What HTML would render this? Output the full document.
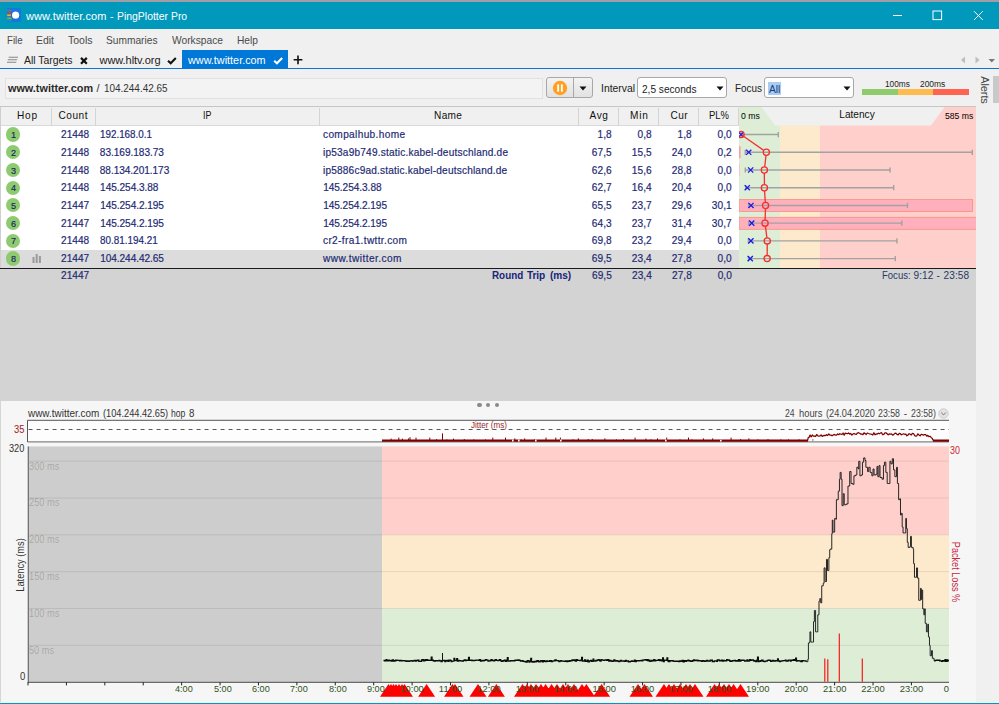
<!DOCTYPE html>
<html><head><meta charset="utf-8"><title>www.twitter.com - PingPlotter Pro</title>
<style>
html,body{margin:0;padding:0}
body{width:999px;height:704px;overflow:hidden;background:#f0f0f0;position:relative;font-family:"Liberation Sans",sans-serif}
.r{position:absolute;display:block}
.t{position:absolute;white-space:nowrap;line-height:14px;height:14px}
</style></head><body>
<div class="r" style="left:0px;top:0px;width:999px;height:2px;background:#a29ea6;"></div>
<div class="r" style="left:0px;top:2px;width:999px;height:27.3px;background:#0099bc;"></div>
<svg class="r" style="left:7px;top:8px" width="14" height="14" viewBox="0 0 14 14"><rect width="14" height="14" fill="#1677dc"/><rect x="0" y="2" width="4.6" height="0.9" fill="#2b8df0"/><rect x="0" y="11.9" width="4.6" height="0.9" fill="#2b8df0"/><path d="M0.2 3.3H4.8L4.3 5H0.2Z" fill="#f0381f"/><rect x="0.2" y="6.4" width="3.6" height="1.7" fill="#f5b800"/><path d="M0.2 9.4H4.3L4.8 11.2H0.2Z" fill="#7cc00a"/><circle cx="8.6" cy="7.2" r="4.3" fill="#0e62cf"/><circle cx="8.6" cy="7.2" r="3.6" fill="#fff"/></svg>
<span class="t" style="left:26.00px;top:9px;font-size:11px;letter-spacing:0.118px;color:#fff;">www.twitter.com </span>
<span class="t" style="left:110.30px;top:9px;font-size:11px;transform:scaleX(0.9554);transform-origin:0 50%;color:#fff;">- </span>
<span class="t" style="left:117.00px;top:9px;font-size:11px;transform:scaleX(0.9478);transform-origin:0 50%;color:#fff;">PingPlotter </span>
<span class="t" style="left:171.40px;top:9px;font-size:11px;transform:scaleX(0.9405);transform-origin:0 50%;color:#fff;">Pro</span>
<svg class="r" style="left:880px;top:2px" width="119" height="28" viewBox="0 0 119 28"><g stroke="#fff" stroke-width="1" fill="none"><path d="M13 13.5H22"/><rect x="53" y="9" width="8.6" height="8.6"/><path d="M94 9.2L102.8 18M102.8 9.2L94 18"/></g></svg>
<span class="t" style="left:6.50px;top:33px;font-size:11px;transform:scaleX(0.8744);transform-origin:0 50%;color:#4a4a4a;">File</span>
<span class="t" style="left:35.50px;top:33px;font-size:11px;transform:scaleX(0.9496);transform-origin:0 50%;color:#4a4a4a;">Edit</span>
<span class="t" style="left:67.50px;top:33px;font-size:11px;transform:scaleX(0.9541);transform-origin:0 50%;color:#4a4a4a;">Tools</span>
<span class="t" style="left:106.00px;top:33px;font-size:11px;transform:scaleX(0.9258);transform-origin:0 50%;color:#4a4a4a;">Summaries</span>
<span class="t" style="left:172.00px;top:33px;font-size:11px;transform:scaleX(0.9303);transform-origin:0 50%;color:#4a4a4a;">Workspace</span>
<span class="t" style="left:237.00px;top:33px;font-size:11px;transform:scaleX(0.9282);transform-origin:0 50%;color:#4a4a4a;">Help</span>
<div class="r" style="left:182.2px;top:50px;width:105.4px;height:18.3px;background:#0078d7;"></div>
<div class="r" style="left:0px;top:67.6px;width:999px;height:1.8px;background:#0a74d4;"></div>
<svg class="r" style="left:6px;top:55px" width="14" height="10" viewBox="0 0 14 10"><g stroke="#858585" stroke-width="1.1"><path d="M2.7 2.3H12M1.8 4.8H11.1M1 7.3H10.3"/></g></svg>
<span class="t" style="left:24.00px;top:53px;font-size:11px;transform:scaleX(0.9481);transform-origin:0 50%;color:#222;">All Targets</span>
<svg class="r" style="left:79px;top:56px" width="10" height="10" viewBox="0 0 10 10"><path d="M2 1.9L7.8 7.7M7.8 1.9L2 7.7" stroke="#111" stroke-width="2.2"/></svg>
<span class="t" style="left:99.50px;top:53px;font-size:11px;letter-spacing:-0.049px;color:#222;">www.hltv.org</span>
<svg class="r" style="left:166px;top:55px" width="12" height="10" viewBox="0 0 12 10"><path d="M2 5.7L4.7 8.2L9.8 2.9" stroke="#111" stroke-width="2.1" fill="none"/></svg>
<span class="t" style="left:188.00px;top:53px;font-size:11px;transform:scaleX(0.9842);transform-origin:0 50%;color:#fff;">www.twitter.com</span>
<svg class="r" style="left:272px;top:55px" width="12" height="10" viewBox="0 0 12 10"><path d="M2.2 5.7L4.9 8.2L10.2 2.9" stroke="#fff" stroke-width="2.1" fill="none"/></svg>
<svg class="r" style="left:292px;top:54px" width="12" height="12" viewBox="0 0 12 12"><path d="M6 1.4V10.2M1.6 5.8H10.4" stroke="#111" stroke-width="1.6"/></svg>
<svg class="r" style="left:958px;top:54px" width="40" height="12" viewBox="0 0 40 12"><path d="M7 2.5V9.5L3 6Z" fill="#bdbdbd"/><path d="M17.5 2.5V9.5L21.5 6Z" fill="#bdbdbd"/><path d="M30.5 5H37L33.75 8.5Z" fill="#777"/></svg>
<div class="r" style="left:4.5px;top:78px;width:538px;height:20.5px;background:#f3f3f3;border:1px solid #e1e1e1;box-sizing:border-box;"></div>
<span class="t" style="left:8.00px;top:81px;font-size:11px;transform:scaleX(0.9840);transform-origin:0 50%;color:#2a2a2a;font-weight:bold;">www.twitter.com</span>
<span class="t" style="left:96.50px;top:81px;font-size:11px;letter-spacing:0.000px;color:#333;">/</span>
<span class="t" style="left:104.30px;top:81px;font-size:11px;transform:scaleX(0.9027);transform-origin:0 50%;color:#333;">104.244.42.65</span>
<div class="r" style="left:545.8px;top:77.3px;width:46.8px;height:21.2px;background:linear-gradient(#f3f3f3,#e2e2e2);border:1px solid #a8a8a8;border-radius:3px;box-sizing:border-box;"></div>
<div class="r" style="left:573px;top:78.3px;width:1px;height:19.2px;background:#a8a8a8;"></div>
<svg class="r" style="left:551.9px;top:80.1px" width="16" height="16" viewBox="0 0 16 16"><circle cx="8" cy="8" r="7.2" fill="#ffa01e"/><rect x="5.2" y="4.3" width="1.9" height="7.4" fill="#fff"/><rect x="8.9" y="4.3" width="1.9" height="7.4" fill="#fff"/></svg>
<svg class="r" style="left:579px;top:85.5px" width="8" height="5" viewBox="0 0 8 5"><path d="M0.5 0.5H7.5L4 4.5Z" fill="#111"/></svg>
<span class="t" style="left:600.50px;top:81px;font-size:11px;transform:scaleX(0.9425);transform-origin:0 50%;color:#222;">Interval</span>
<div class="r" style="left:637px;top:77.3px;width:90.4px;height:21.2px;background:#fff;border:1px solid #a8a8a8;border-radius:3px;box-sizing:border-box;"></div>
<span class="t" style="left:641.70px;top:82px;font-size:11px;transform:scaleX(0.9188);transform-origin:0 50%;color:#222;">2,5 seconds</span>
<svg class="r" style="left:715.5px;top:86px" width="8" height="5" viewBox="0 0 8 5"><path d="M0.5 0.5H7.5L4 4.5Z" fill="#111"/></svg>
<span class="t" style="left:735.00px;top:81px;font-size:11px;transform:scaleX(0.9013);transform-origin:0 50%;color:#222;">Focus</span>
<div class="r" style="left:764px;top:77.3px;width:90.4px;height:21.2px;background:#fff;border:1px solid #a8a8a8;border-radius:3px;box-sizing:border-box;"></div>
<div class="r" style="left:768px;top:81.8px;width:12.7px;height:13.2px;background:#a9cdf2;"></div>
<span class="t" style="left:768.50px;top:82px;font-size:11px;transform:scaleX(0.9325);transform-origin:0 50%;color:#1a3c7a;">All</span>
<svg class="r" style="left:843.3px;top:86px" width="8" height="5" viewBox="0 0 8 5"><path d="M0.5 0.5H7.5L4 4.5Z" fill="#111"/></svg>
<div class="r" style="left:862px;top:89.3px;width:36px;height:5.5px;background:#8fcb6d;"></div>
<div class="r" style="left:897.8px;top:89.3px;width:35.3px;height:5.5px;background:#ffbc4e;"></div>
<div class="r" style="left:933px;top:89.3px;width:36px;height:5.5px;background:#ff6450;"></div>
<span class="t" style="left:885.30px;top:77px;font-size:9.2px;transform:scaleX(0.9017);transform-origin:0 50%;color:#222;">100ms</span>
<span class="t" style="left:920.30px;top:77px;font-size:9.2px;transform:scaleX(0.9162);transform-origin:0 50%;color:#222;">200ms</span>
<div class="r" style="left:993px;top:76px;width:6px;height:27px;background:#c9c9c9;"></div>
<span class="t" style="left:985.3px;top:89.5px;font-size:11px;color:#444;transform:translate(-50%,-50%) rotate(90deg);letter-spacing:-0.1px">Alerts</span>
<div class="r" style="left:0px;top:105.5px;width:976px;height:1.5px;background:#c6c6c6;"></div>
<div class="r" style="left:0px;top:107px;width:976px;height:18.5px;background:#f0f0f0;"></div>
<div class="r" style="left:0px;top:107px;width:1px;height:161px;background:#cfcfcf;"></div>
<div class="r" style="left:1px;top:125.5px;width:738px;height:142px;background:#fff;"></div>
<div class="r" style="left:1px;top:125px;width:738px;height:0.8px;background:#dadada;"></div>
<div class="r" style="left:739.0px;top:107px;width:40.6px;height:161px;background:#deeed6;"></div>
<div class="r" style="left:779.6px;top:107px;width:40.4px;height:161px;background:#fde9cb;"></div>
<div class="r" style="left:820px;top:107px;width:156px;height:161px;background:#ffd0cb;"></div>
<svg class="r" style="left:739px;top:107px" width="237" height="19" viewBox="0 0 237 19"><path d="M22.5 0H205.5L192 18.5H36Z" fill="#f0f0f0"/></svg>
<div class="r" style="left:51.0px;top:108px;width:1px;height:17px;background:#d4d4d4;"></div>
<div class="r" style="left:94.5px;top:108px;width:1px;height:17px;background:#d4d4d4;"></div>
<div class="r" style="left:319.0px;top:108px;width:1px;height:17px;background:#d4d4d4;"></div>
<div class="r" style="left:578.1px;top:108px;width:1px;height:17px;background:#d4d4d4;"></div>
<div class="r" style="left:618.1px;top:108px;width:1px;height:17px;background:#d4d4d4;"></div>
<div class="r" style="left:657.9px;top:108px;width:1px;height:17px;background:#d4d4d4;"></div>
<div class="r" style="left:697.8px;top:108px;width:1px;height:17px;background:#d4d4d4;"></div>
<div class="r" style="left:738.1px;top:108px;width:1px;height:17px;background:#d4d4d4;"></div>
<span class="t" style="left:17.00px;top:109px;font-size:10.1px;letter-spacing:0.736px;color:#111;">Hop</span>
<span class="t" style="left:58.50px;top:109px;font-size:10.1px;letter-spacing:0.512px;color:#111;">Count</span>
<span class="t" style="left:203.10px;top:109px;font-size:10.1px;transform:scaleX(0.8802);transform-origin:0 50%;color:#111;">IP</span>
<span class="t" style="left:434.00px;top:109px;font-size:10.1px;letter-spacing:0.352px;color:#111;">Name</span>
<span class="t" style="left:589.50px;top:109px;font-size:10.1px;letter-spacing:0.639px;color:#111;">Avg</span>
<span class="t" style="left:630.00px;top:109px;font-size:10.1px;letter-spacing:0.862px;color:#111;">Min</span>
<span class="t" style="left:670.50px;top:109px;font-size:10.1px;letter-spacing:0.362px;color:#111;">Cur</span>
<span class="t" style="left:709.00px;top:109px;font-size:10.1px;transform:scaleX(0.9374);transform-origin:0 50%;color:#111;">PL%</span>
<span class="t" style="left:839.30px;top:108px;font-size:10.1px;letter-spacing:0.004px;color:#111;">Latency</span>
<span class="t" style="left:740.80px;top:109px;font-size:9.0px;transform:scaleX(0.9639);transform-origin:0 50%;color:#000;">0 ms</span>
<span class="t" style="left:945.00px;top:109px;font-size:9.0px;transform:scaleX(0.9589);transform-origin:0 50%;color:#000;">585 ms</span>
<div class="r" style="left:1px;top:249.94px;width:738px;height:17.72px;background:#dcdcdc;"></div>
<div class="r" style="left:6.2px;top:127.36px;width:14.2px;height:14.2px;border-radius:50%;background:#8ecb70"></div>
<span class="t" style="left:10.80px;top:128px;font-size:9.8px;transform:scaleX(0.9357);transform-origin:0 50%;color:#17265f;-webkit-text-stroke:0.15px #17265f;">1</span>
<span class="t" style="left:61.00px;top:128px;font-size:10.1px;letter-spacing:0.028px;color:#1d2a72;-webkit-text-stroke:0.18px #1d2a72;">21448</span>
<span class="t" style="left:100.00px;top:128px;font-size:10.1px;transform:scaleX(0.9746);transform-origin:0 50%;color:#1d2a72;-webkit-text-stroke:0.18px #1d2a72;">192.168.0.1</span>
<span class="t" style="left:323.00px;top:128px;font-size:10.1px;letter-spacing:0.355px;color:#1d2a72;-webkit-text-stroke:0.18px #1d2a72;">compalhub.home</span>
<span class="t" style="left:597.50px;top:128px;font-size:10.1px;letter-spacing:0.028px;color:#1d2a72;-webkit-text-stroke:0.18px #1d2a72;">1,8</span>
<span class="t" style="left:637.50px;top:128px;font-size:10.1px;letter-spacing:0.028px;color:#1d2a72;-webkit-text-stroke:0.18px #1d2a72;">0,8</span>
<span class="t" style="left:677.50px;top:128px;font-size:10.1px;letter-spacing:0.028px;color:#1d2a72;-webkit-text-stroke:0.18px #1d2a72;">1,8</span>
<span class="t" style="left:717.50px;top:128px;font-size:10.1px;letter-spacing:0.028px;color:#1d2a72;-webkit-text-stroke:0.18px #1d2a72;">0,0</span>
<div class="r" style="left:6.2px;top:145.08px;width:14.2px;height:14.2px;border-radius:50%;background:#8ecb70"></div>
<span class="t" style="left:10.80px;top:146px;font-size:9.8px;transform:scaleX(0.9357);transform-origin:0 50%;color:#17265f;-webkit-text-stroke:0.15px #17265f;">2</span>
<span class="t" style="left:61.00px;top:146px;font-size:10.1px;letter-spacing:0.028px;color:#1d2a72;-webkit-text-stroke:0.18px #1d2a72;">21448</span>
<span class="t" style="left:99.80px;top:146px;font-size:10.1px;letter-spacing:-0.033px;color:#1d2a72;-webkit-text-stroke:0.18px #1d2a72;">83.169.183.73</span>
<span class="t" style="left:323.00px;top:146px;font-size:10.1px;letter-spacing:0.192px;color:#1d2a72;-webkit-text-stroke:0.18px #1d2a72;">ip53a9b749.static.kabel-deutschland.de</span>
<span class="t" style="left:591.86px;top:146px;font-size:10.1px;letter-spacing:0.026px;color:#1d2a72;-webkit-text-stroke:0.18px #1d2a72;">67,5</span>
<span class="t" style="left:631.86px;top:146px;font-size:10.1px;letter-spacing:0.026px;color:#1d2a72;-webkit-text-stroke:0.18px #1d2a72;">15,5</span>
<span class="t" style="left:671.86px;top:146px;font-size:10.1px;letter-spacing:0.026px;color:#1d2a72;-webkit-text-stroke:0.18px #1d2a72;">24,0</span>
<span class="t" style="left:717.50px;top:146px;font-size:10.1px;letter-spacing:0.028px;color:#1d2a72;-webkit-text-stroke:0.18px #1d2a72;">0,2</span>
<div class="r" style="left:6.2px;top:162.80px;width:14.2px;height:14.2px;border-radius:50%;background:#8ecb70"></div>
<span class="t" style="left:10.80px;top:164px;font-size:9.8px;transform:scaleX(0.9357);transform-origin:0 50%;color:#17265f;-webkit-text-stroke:0.15px #17265f;">3</span>
<span class="t" style="left:61.00px;top:164px;font-size:10.1px;letter-spacing:0.028px;color:#1d2a72;-webkit-text-stroke:0.18px #1d2a72;">21448</span>
<span class="t" style="left:99.80px;top:164px;font-size:10.1px;letter-spacing:-0.054px;color:#1d2a72;-webkit-text-stroke:0.18px #1d2a72;">88.134.201.173</span>
<span class="t" style="left:323.00px;top:164px;font-size:10.1px;letter-spacing:0.185px;color:#1d2a72;-webkit-text-stroke:0.18px #1d2a72;">ip5886c9ad.static.kabel-deutschland.de</span>
<span class="t" style="left:591.86px;top:164px;font-size:10.1px;letter-spacing:0.026px;color:#1d2a72;-webkit-text-stroke:0.18px #1d2a72;">62,6</span>
<span class="t" style="left:631.86px;top:164px;font-size:10.1px;letter-spacing:0.026px;color:#1d2a72;-webkit-text-stroke:0.18px #1d2a72;">15,6</span>
<span class="t" style="left:671.86px;top:164px;font-size:10.1px;letter-spacing:0.026px;color:#1d2a72;-webkit-text-stroke:0.18px #1d2a72;">28,8</span>
<span class="t" style="left:717.50px;top:164px;font-size:10.1px;letter-spacing:0.028px;color:#1d2a72;-webkit-text-stroke:0.18px #1d2a72;">0,0</span>
<div class="r" style="left:6.2px;top:180.52px;width:14.2px;height:14.2px;border-radius:50%;background:#8ecb70"></div>
<span class="t" style="left:10.80px;top:181px;font-size:9.8px;transform:scaleX(0.9357);transform-origin:0 50%;color:#17265f;-webkit-text-stroke:0.15px #17265f;">4</span>
<span class="t" style="left:61.00px;top:181px;font-size:10.1px;letter-spacing:0.028px;color:#1d2a72;-webkit-text-stroke:0.18px #1d2a72;">21448</span>
<span class="t" style="left:100.10px;top:181px;font-size:10.1px;letter-spacing:-0.052px;color:#1d2a72;-webkit-text-stroke:0.18px #1d2a72;">145.254.3.88</span>
<span class="t" style="left:323.20px;top:181px;font-size:10.1px;letter-spacing:-0.052px;color:#1d2a72;-webkit-text-stroke:0.18px #1d2a72;">145.254.3.88</span>
<span class="t" style="left:591.86px;top:181px;font-size:10.1px;letter-spacing:0.026px;color:#1d2a72;-webkit-text-stroke:0.18px #1d2a72;">62,7</span>
<span class="t" style="left:631.86px;top:181px;font-size:10.1px;letter-spacing:0.026px;color:#1d2a72;-webkit-text-stroke:0.18px #1d2a72;">16,4</span>
<span class="t" style="left:671.86px;top:181px;font-size:10.1px;letter-spacing:0.026px;color:#1d2a72;-webkit-text-stroke:0.18px #1d2a72;">20,4</span>
<span class="t" style="left:717.50px;top:181px;font-size:10.1px;letter-spacing:0.028px;color:#1d2a72;-webkit-text-stroke:0.18px #1d2a72;">0,0</span>
<div class="r" style="left:6.2px;top:198.24px;width:14.2px;height:14.2px;border-radius:50%;background:#8ecb70"></div>
<span class="t" style="left:10.80px;top:199px;font-size:9.8px;transform:scaleX(0.9357);transform-origin:0 50%;color:#17265f;-webkit-text-stroke:0.15px #17265f;">5</span>
<span class="t" style="left:61.00px;top:199px;font-size:10.1px;letter-spacing:0.028px;color:#1d2a72;-webkit-text-stroke:0.18px #1d2a72;">21447</span>
<span class="t" style="left:100.20px;top:199px;font-size:10.1px;letter-spacing:-0.066px;color:#1d2a72;-webkit-text-stroke:0.18px #1d2a72;">145.254.2.195</span>
<span class="t" style="left:323.20px;top:199px;font-size:10.1px;letter-spacing:-0.058px;color:#1d2a72;-webkit-text-stroke:0.18px #1d2a72;">145.254.2.195</span>
<span class="t" style="left:591.86px;top:199px;font-size:10.1px;letter-spacing:0.026px;color:#1d2a72;-webkit-text-stroke:0.18px #1d2a72;">65,5</span>
<span class="t" style="left:631.86px;top:199px;font-size:10.1px;letter-spacing:0.026px;color:#1d2a72;-webkit-text-stroke:0.18px #1d2a72;">23,7</span>
<span class="t" style="left:671.86px;top:199px;font-size:10.1px;letter-spacing:0.026px;color:#1d2a72;-webkit-text-stroke:0.18px #1d2a72;">29,6</span>
<span class="t" style="left:711.86px;top:199px;font-size:10.1px;letter-spacing:0.026px;color:#1d2a72;-webkit-text-stroke:0.18px #1d2a72;">30,1</span>
<div class="r" style="left:6.2px;top:215.96px;width:14.2px;height:14.2px;border-radius:50%;background:#8ecb70"></div>
<span class="t" style="left:10.80px;top:217px;font-size:9.8px;transform:scaleX(0.9357);transform-origin:0 50%;color:#17265f;-webkit-text-stroke:0.15px #17265f;">6</span>
<span class="t" style="left:61.00px;top:217px;font-size:10.1px;letter-spacing:0.028px;color:#1d2a72;-webkit-text-stroke:0.18px #1d2a72;">21447</span>
<span class="t" style="left:100.20px;top:217px;font-size:10.1px;letter-spacing:-0.066px;color:#1d2a72;-webkit-text-stroke:0.18px #1d2a72;">145.254.2.195</span>
<span class="t" style="left:323.20px;top:217px;font-size:10.1px;letter-spacing:-0.058px;color:#1d2a72;-webkit-text-stroke:0.18px #1d2a72;">145.254.2.195</span>
<span class="t" style="left:591.86px;top:217px;font-size:10.1px;letter-spacing:0.026px;color:#1d2a72;-webkit-text-stroke:0.18px #1d2a72;">64,3</span>
<span class="t" style="left:631.86px;top:217px;font-size:10.1px;letter-spacing:0.026px;color:#1d2a72;-webkit-text-stroke:0.18px #1d2a72;">23,7</span>
<span class="t" style="left:671.86px;top:217px;font-size:10.1px;letter-spacing:0.026px;color:#1d2a72;-webkit-text-stroke:0.18px #1d2a72;">31,4</span>
<span class="t" style="left:711.86px;top:217px;font-size:10.1px;letter-spacing:0.026px;color:#1d2a72;-webkit-text-stroke:0.18px #1d2a72;">30,7</span>
<div class="r" style="left:6.2px;top:233.68px;width:14.2px;height:14.2px;border-radius:50%;background:#8ecb70"></div>
<span class="t" style="left:10.80px;top:234px;font-size:9.8px;transform:scaleX(0.9357);transform-origin:0 50%;color:#17265f;-webkit-text-stroke:0.15px #17265f;">7</span>
<span class="t" style="left:61.00px;top:234px;font-size:10.1px;letter-spacing:0.028px;color:#1d2a72;-webkit-text-stroke:0.18px #1d2a72;">21448</span>
<span class="t" style="left:99.80px;top:234px;font-size:10.1px;transform:scaleX(0.9784);transform-origin:0 50%;color:#1d2a72;-webkit-text-stroke:0.18px #1d2a72;">80.81.194.21</span>
<span class="t" style="left:323.00px;top:234px;font-size:10.1px;letter-spacing:0.352px;color:#1d2a72;-webkit-text-stroke:0.18px #1d2a72;">cr2-fra1.twttr.com</span>
<span class="t" style="left:591.86px;top:234px;font-size:10.1px;letter-spacing:0.026px;color:#1d2a72;-webkit-text-stroke:0.18px #1d2a72;">69,8</span>
<span class="t" style="left:631.86px;top:234px;font-size:10.1px;letter-spacing:0.026px;color:#1d2a72;-webkit-text-stroke:0.18px #1d2a72;">23,2</span>
<span class="t" style="left:671.86px;top:234px;font-size:10.1px;letter-spacing:0.026px;color:#1d2a72;-webkit-text-stroke:0.18px #1d2a72;">29,4</span>
<span class="t" style="left:717.50px;top:234px;font-size:10.1px;letter-spacing:0.028px;color:#1d2a72;-webkit-text-stroke:0.18px #1d2a72;">0,0</span>
<div class="r" style="left:6.2px;top:251.40px;width:14.2px;height:14.2px;border-radius:50%;background:#8ecb70"></div>
<span class="t" style="left:10.80px;top:252px;font-size:9.8px;transform:scaleX(0.9357);transform-origin:0 50%;color:#17265f;-webkit-text-stroke:0.15px #17265f;">8</span>
<span class="t" style="left:61.00px;top:252px;font-size:10.1px;letter-spacing:0.028px;color:#1d2a72;-webkit-text-stroke:0.18px #1d2a72;">21447</span>
<span class="t" style="left:100.20px;top:252px;font-size:10.1px;letter-spacing:-0.066px;color:#1d2a72;-webkit-text-stroke:0.18px #1d2a72;">104.244.42.65</span>
<span class="t" style="left:323.00px;top:252px;font-size:10.1px;letter-spacing:0.429px;color:#1d2a72;-webkit-text-stroke:0.18px #1d2a72;">www.twitter.com</span>
<span class="t" style="left:591.86px;top:252px;font-size:10.1px;letter-spacing:0.026px;color:#1d2a72;-webkit-text-stroke:0.18px #1d2a72;">69,5</span>
<span class="t" style="left:631.86px;top:252px;font-size:10.1px;letter-spacing:0.026px;color:#1d2a72;-webkit-text-stroke:0.18px #1d2a72;">23,4</span>
<span class="t" style="left:671.86px;top:252px;font-size:10.1px;letter-spacing:0.026px;color:#1d2a72;-webkit-text-stroke:0.18px #1d2a72;">27,8</span>
<span class="t" style="left:717.50px;top:252px;font-size:10.1px;letter-spacing:0.028px;color:#1d2a72;-webkit-text-stroke:0.18px #1d2a72;">0,0</span>
<svg class="r" style="left:32px;top:253.40px" width="10" height="10" viewBox="0 0 10 10"><g fill="#9a9a9a"><rect x="0.5" y="4" width="2" height="6"/><rect x="3.7" y="1" width="2" height="9"/><rect x="6.9" y="3" width="2" height="7"/></g></svg>
<div class="r" style="left:0px;top:268px;width:976px;height:133px;background:#d3d3d3;"></div>
<div class="r" style="left:0px;top:267.6px;width:976px;height:1.4px;background:#1a1a1a;"></div>
<span class="t" style="left:61.00px;top:269px;font-size:10.1px;letter-spacing:0.028px;color:#1d2a72;-webkit-text-stroke:0.18px #1d2a72;">21447</span>
<span class="t" style="left:491.50px;top:269px;font-size:10.1px;transform:scaleX(0.9758);transform-origin:0 50%;color:#16257a;font-weight:bold;">Round </span>
<span class="t" style="left:526.90px;top:269px;font-size:10.1px;letter-spacing:-0.073px;color:#16257a;font-weight:bold;">Trip </span>
<span class="t" style="left:550.00px;top:269px;font-size:10.1px;letter-spacing:-0.075px;color:#16257a;font-weight:bold;">(ms)</span>
<span class="t" style="left:592.06px;top:269px;font-size:10.1px;letter-spacing:0.026px;color:#1d2a72;-webkit-text-stroke:0.18px #1d2a72;">69,5</span>
<span class="t" style="left:632.06px;top:269px;font-size:10.1px;letter-spacing:0.026px;color:#1d2a72;-webkit-text-stroke:0.18px #1d2a72;">23,4</span>
<span class="t" style="left:672.06px;top:269px;font-size:10.1px;letter-spacing:0.026px;color:#1d2a72;-webkit-text-stroke:0.18px #1d2a72;">27,8</span>
<span class="t" style="left:717.70px;top:269px;font-size:10.1px;letter-spacing:0.028px;color:#1d2a72;-webkit-text-stroke:0.18px #1d2a72;">0,0</span>
<span class="t" style="left:881.90px;top:269px;font-size:10.1px;transform:scaleX(0.9436);transform-origin:0 50%;color:#2b3763;">Focus: </span>
<span class="t" style="left:913.50px;top:269px;font-size:10.1px;letter-spacing:0.047px;color:#2b3763;">9:12 </span>
<span class="t" style="left:936.40px;top:269px;font-size:10.1px;letter-spacing:0.000px;color:#2b3763;">- </span>
<span class="t" style="left:943.60px;top:269px;font-size:10.1px;letter-spacing:0.056px;color:#2b3763;">23:58</span>
<svg class="r" style="left:739px;top:107px;overflow:hidden" width="237" height="161" viewBox="739 107 237 161"><rect x="739.0" y="199.58" width="233.6" height="12" fill="#ffb0bc" stroke="#f4907c" stroke-width="0.8"/><rect x="739.0" y="217.30" width="237.5" height="12" fill="#ffb0bc" stroke="#f4907c" stroke-width="0.8"/><rect x="739.0" y="146.22" width="1.6" height="12" fill="#f6a0a0"/><rect x="739.0" y="163.94" width="0.8" height="12" fill="#f8c0c0"/><path d="M741.00 134.56H778.28M741.00 131.96v5.2M778.28 131.96v5.2" stroke="#a2a2a2" stroke-width="1.4" fill="none"/><path d="M745.28 152.28H972.28M745.28 149.68v5.2M972.28 149.68v5.2" stroke="#a2a2a2" stroke-width="1.4" fill="none"/><path d="M745.32 170.00H890.07M745.32 167.40v5.2M890.07 167.40v5.2" stroke="#a2a2a2" stroke-width="1.4" fill="none"/><path d="M745.64 187.72H893.71M745.64 185.12v5.2M893.71 185.12v5.2" stroke="#a2a2a2" stroke-width="1.4" fill="none"/><path d="M748.60 205.44H907.48M748.60 202.84v5.2M907.48 202.84v5.2" stroke="#a2a2a2" stroke-width="1.4" fill="none"/><path d="M748.60 223.16H901.81M748.60 220.56v5.2M901.81 220.56v5.2" stroke="#a2a2a2" stroke-width="1.4" fill="none"/><path d="M748.40 240.88H896.95M748.40 238.28v5.2M896.95 238.28v5.2" stroke="#a2a2a2" stroke-width="1.4" fill="none"/><path d="M748.48 258.60H895.33M748.48 256.00v5.2M895.33 256.00v5.2" stroke="#a2a2a2" stroke-width="1.4" fill="none"/><path d="M743.54 136.34L763.80 150.50" stroke="#f52f2f" stroke-width="1.3" fill="none"/><path d="M765.99 155.36L764.70 166.92" stroke="#f52f2f" stroke-width="1.3" fill="none"/><path d="M764.36 173.10L764.39 184.62" stroke="#f52f2f" stroke-width="1.3" fill="none"/><path d="M764.59 190.81L765.33 202.35" stroke="#f52f2f" stroke-width="1.3" fill="none"/><path d="M765.44 208.54L765.13 220.06" stroke="#f52f2f" stroke-width="1.3" fill="none"/><path d="M765.43 226.24L766.88 237.80" stroke="#f52f2f" stroke-width="1.3" fill="none"/><path d="M767.25 243.98L767.17 255.50" stroke="#f52f2f" stroke-width="1.3" fill="none"/><path d="M738.40 131.96l5.2 5.2M743.60 131.96l-5.2 5.2" stroke="#1a1ae6" stroke-width="1.3" fill="none"/><circle cx="741.00" cy="134.56" r="3.1" stroke="#f52f2f" stroke-width="1.3" fill="none"/><path d="M746.12 149.68l5.2 5.2M751.32 149.68l-5.2 5.2" stroke="#1a1ae6" stroke-width="1.3" fill="none"/><circle cx="766.34" cy="152.28" r="3.1" stroke="#f52f2f" stroke-width="1.3" fill="none"/><path d="M748.06 167.40l5.2 5.2M753.26 167.40l-5.2 5.2" stroke="#1a1ae6" stroke-width="1.3" fill="none"/><circle cx="764.35" cy="170.00" r="3.1" stroke="#f52f2f" stroke-width="1.3" fill="none"/><path d="M744.66 185.12l5.2 5.2M749.86 185.12l-5.2 5.2" stroke="#1a1ae6" stroke-width="1.3" fill="none"/><circle cx="764.39" cy="187.72" r="3.1" stroke="#f52f2f" stroke-width="1.3" fill="none"/><path d="M748.39 202.84l5.2 5.2M753.59 202.84l-5.2 5.2" stroke="#1a1ae6" stroke-width="1.3" fill="none"/><circle cx="765.53" cy="205.44" r="3.1" stroke="#f52f2f" stroke-width="1.3" fill="none"/><path d="M749.12 220.56l5.2 5.2M754.32 220.56l-5.2 5.2" stroke="#1a1ae6" stroke-width="1.3" fill="none"/><circle cx="765.04" cy="223.16" r="3.1" stroke="#f52f2f" stroke-width="1.3" fill="none"/><path d="M748.31 238.28l5.2 5.2M753.51 238.28l-5.2 5.2" stroke="#1a1ae6" stroke-width="1.3" fill="none"/><circle cx="767.27" cy="240.88" r="3.1" stroke="#f52f2f" stroke-width="1.3" fill="none"/><path d="M747.66 256.00l5.2 5.2M752.86 256.00l-5.2 5.2" stroke="#1a1ae6" stroke-width="1.3" fill="none"/><circle cx="767.15" cy="258.60" r="3.1" stroke="#f52f2f" stroke-width="1.3" fill="none"/></svg>
<div class="r" style="left:0px;top:400.9px;width:975.5px;height:301.6px;background:#f6f6f6;"></div>
<div class="r" style="left:0px;top:400.9px;width:1px;height:301.6px;background:#d6d6d6;"></div>
<div class="r" style="left:0px;top:702.5px;width:999px;height:1.5px;background:#0099bc;"></div>
<div class="r" style="left:477.4px;top:402.7px;width:4.2px;height:4.2px;border-radius:50%;background:#8a8a8a"></div>
<div class="r" style="left:486.2px;top:402.7px;width:4.2px;height:4.2px;border-radius:50%;background:#8a8a8a"></div>
<div class="r" style="left:494.9px;top:402.7px;width:4.2px;height:4.2px;border-radius:50%;background:#8a8a8a"></div>
<span class="t" style="left:27.60px;top:407px;font-size:10.1px;transform:scaleX(0.9848);transform-origin:0 50%;color:#333;">www.twitter.com </span>
<span class="t" style="left:102.90px;top:407px;font-size:10.1px;transform:scaleX(0.9142);transform-origin:0 50%;color:#333;">(104.244.42.65) </span>
<span class="t" style="left:171.00px;top:407px;font-size:10.1px;transform:scaleX(0.8545);transform-origin:0 50%;color:#333;">hop </span>
<span class="t" style="left:189.40px;top:407px;font-size:10.1px;transform:scaleX(0.9613);transform-origin:0 50%;color:#333;">8</span>
<span class="t" style="left:784.90px;top:407px;font-size:10.1px;transform:scaleX(0.8545);transform-origin:0 50%;color:#444;">24 </span>
<span class="t" style="left:798.80px;top:407px;font-size:10.1px;transform:scaleX(0.9262);transform-origin:0 50%;color:#444;">hours </span>
<span class="t" style="left:825.50px;top:407px;font-size:10.1px;transform:scaleX(0.9089);transform-origin:0 50%;color:#444;">(24.04.2020 </span>
<span class="t" style="left:877.70px;top:407px;font-size:10.1px;transform:scaleX(0.8704);transform-origin:0 50%;color:#444;">23:58 </span>
<span class="t" style="left:903.80px;top:407px;font-size:10.1px;letter-spacing:0.000px;color:#444;">- </span>
<span class="t" style="left:910.50px;top:407px;font-size:10.1px;transform:scaleX(0.8694);transform-origin:0 50%;color:#444;">23:58)</span>
<svg class="r" style="left:938px;top:408px" width="11" height="11" viewBox="0 0 11 11"><circle cx="5.5" cy="5.5" r="4.8" fill="#e2e2e2" stroke="#c4c4c4" stroke-width="0.7"/><path d="M3.2 4.6L5.5 6.9L7.8 4.6" stroke="#777" stroke-width="1" fill="none"/></svg>
<span class="t" style="left:14.30px;top:423px;font-size:10.4px;transform:scaleX(0.8990);transform-origin:0 50%;color:#a02020;">35</span>
<span class="t" style="left:9.40px;top:442px;font-size:10.4px;transform:scaleX(0.8817);transform-origin:0 50%;color:#333;">320</span>
<span class="t" style="left:19.60px;top:670px;font-size:10.4px;transform:scaleX(0.9163);transform-origin:0 50%;color:#333;">0</span>
<span class="t" style="left:950.30px;top:444px;font-size:10.4px;transform:scaleX(0.8558);transform-origin:0 50%;color:#cc2a2a;">30</span>
<svg class="r" style="left:0;top:0" width="999" height="704" viewBox="0 0 999 704"><defs><clipPath id="pc"><rect x="28.0" y="446.4" width="921.0" height="235.80000000000007"/></clipPath></defs><rect x="28.0" y="446.4" width="354.0" height="235.8" fill="#cdcdcd"/><rect x="382.0" y="446.4" width="567.0" height="88.43" fill="#ffd0cb"/><rect x="382.0" y="534.83" width="567.0" height="73.69" fill="#fde9cb"/><rect x="382.0" y="608.51" width="567.0" height="73.69" fill="#deeed6"/><path d="M28.0 645.36H949.0" stroke="#000" stroke-opacity="0.085" stroke-width="1"/><path d="M28.0 608.51H949.0" stroke="#000" stroke-opacity="0.085" stroke-width="1"/><path d="M28.0 571.67H949.0" stroke="#000" stroke-opacity="0.085" stroke-width="1"/><path d="M28.0 534.83H949.0" stroke="#000" stroke-opacity="0.085" stroke-width="1"/><path d="M28.0 497.98H949.0" stroke="#000" stroke-opacity="0.085" stroke-width="1"/><path d="M28.0 461.14H949.0" stroke="#000" stroke-opacity="0.085" stroke-width="1"/><rect x="27.5" y="420.3" width="921.5" height="21.6" fill="#fdfdfd"/><path d="M27.5 442V420.3H949.0" stroke="#555" stroke-width="1" fill="none"/><path d="M27.5 441.9H949.0" stroke="#666" stroke-width="1" fill="none"/><path d="M28.6 429.4H949.0" stroke="#555" stroke-width="1.05" stroke-dasharray="3.9 4.1" fill="none"/><path d="M28.3 446.4V682.4000000000001H949.0" stroke="#6a6a6a" stroke-width="1.2" fill="none"/><path d="M28.00 682.2v3.2M66.41 682.2v3.2M104.82 682.2v3.2M143.23 682.2v3.2M181.64 682.2v3.2M220.05 682.2v3.2M258.46 682.2v3.2M296.87 682.2v3.2M335.28 682.2v3.2M373.69 682.2v3.2M412.10 682.2v3.2M450.51 682.2v3.2M488.92 682.2v3.2M527.33 682.2v3.2M565.74 682.2v3.2M604.15 682.2v3.2M642.56 682.2v3.2M680.97 682.2v3.2M719.38 682.2v3.2M757.79 682.2v3.2M796.20 682.2v3.2M834.61 682.2v3.2M873.02 682.2v3.2M911.43 682.2v3.2" stroke="#222" stroke-width="1"/><path d="M383.50 660.51H384.50V660.90H385.30V660.70H386.10V659.70H386.90V660.70H387.70V660.77H388.50V660.11H389.30V660.40H390.10V660.74H391.40V661.08H392.20V659.80H393.50V661.00H394.80V660.70H395.80V660.10H397.10V660.40H398.40V660.40H399.40V660.70H400.40V660.40H401.40V660.78H402.70V660.64H404.00V660.64H404.80V660.86H406.10V661.24H407.10V660.89H408.10V661.08H408.90V661.31H409.70V660.87H410.50V660.82H411.30V660.77H412.10V660.95H413.40V660.88H414.20V660.42H415.50V661.01H416.30V660.46H417.60V660.20H418.90V661.32H420.20V661.30H421.50V659.95H422.50V659.73H423.30V660.70H424.10V660.73H424.90V659.79H425.70V660.40H426.70V659.70H427.70V660.40H428.70V660.40H430.00V660.26H431.30V657.15H432.00V660.28H433.30V660.70H434.30V661.18H435.30V660.79H436.10V660.93H437.40V660.78H438.20V660.90H439.00V660.43H439.80V660.81H441.10V661.64H442.10V660.67H442.90V660.52H443.90V660.32H444.90V661.54H445.70V660.75H447.00V660.44H448.00V661.26H449.00V660.08H450.30V660.32H451.10V661.61H451.90V661.05H453.20V661.18H454.00V658.32H454.70V660.30H456.00V660.51H456.80V658.65H457.50V661.12H458.50V660.47H459.30V660.70H460.60V660.90H461.90V661.03H462.70V661.17H463.50V660.39H464.50V659.80H465.50V660.52H466.30V660.10H467.30V660.40H468.60V657.38H469.30V660.40H470.60V660.15H471.90V660.46H473.20V660.56H474.50V660.41H475.30V660.40H476.10V660.10H477.40V660.10H478.70V660.40H479.50V659.70H480.50V661.00H481.30V660.70H482.30V660.40H483.10V660.70H484.10V660.40H485.40V659.71H486.20V659.85H487.00V660.10H488.00V661.16H489.00V660.88H490.30V660.49H491.10V659.70H492.10V660.47H492.90V660.40H493.70V660.70H494.70V660.10H495.50V659.70H496.30V660.40H497.60V660.53H498.60V660.40H499.40V659.70H500.70V660.94H501.70V661.21H503.00V660.61H504.30V660.17H505.30V661.26H506.60V660.20H507.40V657.64H508.10V661.09H508.90V661.18H510.20V660.77H511.50V660.75H512.50V660.93H513.80V660.70H514.60V660.45H515.40V660.15H516.20V660.40H517.00V660.44H517.80V659.81H519.10V660.38H520.40V661.13H521.40V660.94H522.20V660.70H523.00V661.40H524.30V661.50H525.10V661.63H525.90V661.97H527.20V660.70H528.00V660.70H529.00V662.00H529.80V661.40H530.80V658.54H531.50V661.70H532.80V662.00H534.10V661.40H534.90V661.85H536.20V661.25H537.00V660.64H538.30V661.49H539.10V661.87H540.10V661.08H540.90V660.62H542.20V661.91H543.50V660.60H544.80V661.40H545.60V661.49H546.60V660.83H547.40V661.25H548.40V661.37H549.70V660.58H550.50V660.76H551.30V661.59H552.30V661.10H553.30V660.91H554.10V660.83H554.90V659.98H556.20V660.62H557.20V660.66H558.20V660.84H559.00V661.52H559.80V661.10H560.80V660.74H561.60V661.10H562.90V661.19H563.90V661.32H564.90V661.23H565.70V660.88H566.70V661.60H567.70V660.87H569.00V661.28H569.80V660.68H571.10V660.89H572.10V660.03H572.90V660.23H573.90V659.86H575.20V661.10H576.50V659.70H577.50V660.33H578.80V660.40H579.60V660.57H580.90V660.10H581.70V657.39H582.40V661.00H583.70V661.08H584.70V659.96H585.50V661.27H586.30V661.38H587.30V660.22H588.10V661.73H589.40V660.94H590.70V660.34H591.50V661.35H592.30V661.22H593.10V659.20H593.80V660.90H595.10V661.07H595.90V660.53H597.20V660.10H598.20V659.77H599.20V660.44H600.00V661.13H601.00V659.78H602.00V660.18H603.00V660.10H603.80V660.40H604.60V660.10H605.40V659.91H606.70V660.25H607.50V659.70H608.80V661.00H609.80V660.35H610.80V661.02H612.10V661.23H613.10V660.87H613.90V659.96H614.90V661.16H615.70V660.99H616.70V660.79H617.70V661.07H618.70V661.65H619.70V661.12H620.50V660.40H621.50V661.18H622.50V661.10H623.30V660.90H624.30V661.32H625.60V660.50H626.40V661.03H627.40V660.88H628.40V661.94H629.40V661.70H630.20V661.31H631.50V660.86H632.30V661.23H633.60V661.06H634.40V660.25H635.20V661.55H636.20V660.76H637.50V660.93H638.80V660.77H639.80V660.65H641.10V660.32H641.90V660.81H642.70V660.16H644.00V659.84H645.30V659.70H646.30V660.40H647.30V659.70H648.10V660.94H648.90V660.27H649.90V661.31H650.70V661.06H651.70V660.39H652.50V660.87H653.80V659.72H654.80V660.70H655.80V660.40H657.10V660.40H658.40V659.77H659.70V660.57H660.70V659.83H661.70V660.72H662.70V657.91H663.40V661.47H664.20V660.12H665.20V660.08H666.20V660.42H667.00V657.98H667.70V660.79H668.50V661.60H669.80V660.62H671.10V660.71H672.10V660.55H673.10V661.07H674.10V661.29H674.90V661.05H676.20V661.21H677.50V661.07H678.80V661.62H679.60V660.84H680.90V661.28H682.20V660.45H683.20V661.78H684.20V660.78H685.20V661.31H686.20V660.77H687.20V660.90H688.00V660.15H688.80V660.78H690.10V661.15H690.90V661.27H692.20V660.79H693.50V659.91H694.80V660.47H695.60V660.46H696.90V660.28H697.90V660.86H699.20V660.71H700.20V660.92H701.50V661.23H702.50V660.77H703.80V661.16H704.60V661.34H705.40V660.97H706.70V660.36H707.70V661.13H709.00V661.01H710.30V660.23H711.30V660.28H712.30V661.46H713.60V661.66H714.40V660.92H715.70V660.88H716.50V661.34H717.30V659.84H718.00V659.97H719.30V660.83H720.30V660.70H721.30V660.10H722.60V661.00H723.40V660.54H724.40V660.70H725.40V660.74H726.70V659.70H727.50V660.10H728.30V659.91H729.10V660.38H729.90V661.29H731.20V660.95H732.00V661.03H732.80V660.55H734.10V660.48H735.40V661.00H736.40V660.65H737.20V661.06H738.50V659.70H739.50V661.09H740.80V660.10H741.60V660.40H742.40V660.10H743.70V660.40H744.70V661.00H746.00V660.87H747.00V659.89H747.80V661.00H748.80V660.94H749.60V659.78H750.40V660.24H751.40V659.94H752.20V660.01H753.50V660.79H754.50V661.01H755.80V661.50H756.80V660.05H757.60V657.11H758.30V661.51H759.10V660.97H760.10V661.37H760.90V660.69H761.70V660.20H763.00V661.41H764.30V661.60H765.10V661.07H765.90V661.17H767.20V660.35H768.50V660.19H769.80V660.32H770.60V661.42H771.40V661.16H772.40V660.39H773.70V661.13H774.50V661.07H775.30V660.70H776.30V660.82H777.60V658.97H778.30V661.00H779.60V661.54H780.40V661.06H781.70V660.83H783.00V660.66H784.30V660.57H785.30V660.15H786.10V661.12H786.90V661.00H788.20V660.10H789.50V660.11H790.30V661.00H791.10V660.18H792.10V660.40H793.40V659.70H794.70V660.40H795.70V658.22H796.40V661.15H797.20V660.61H798.00V660.66H798.80V660.87H800.10V660.99H800.90V661.67H802.20V660.63H803.50V660.90H804.80V660.80H805.80V661.16H806.20V661.69" stroke="#0a0a0a" stroke-width="1.35" fill="none"/><path d="M934.08 660.83H935.08V660.36H936.38V660.27H937.68V660.33H938.48V660.05H939.78V660.87H940.78V660.91H941.58V661.22H942.58V660.57H943.38V660.71H944.18V661.07H944.98V659.71H945.78V661.22H947.08V659.96H947.88V660.91H948.68V660.84H949.00V660.60" stroke="#0a0a0a" stroke-width="1.35" fill="none" clip-path="url(#pc)"/><path d="M806.20 661.69H807.90V659.13H808.42V642.93H809.61V642.08H809.95V631.85H810.80V642.08H812.51V642.08H813.53V621.61H814.38V610.53H815.58V631.85H816.77V631.85H817.79V614.79H818.99V601.15H819.84V598.60H820.69V602.86H821.72V585.81H823.25V583.25H824.10V567.90H825.13V581.54H826.49V559.38H827.51V570.46H828.88V557.67H829.73V550.00H830.07V549.13H831.78V533.78H832.29V520.14H832.97V532.08H834.67V518.44H835.70V519.29H836.38V499.68H838.25V491.15H839.45V479.22H840.13V472.40H841.15V479.22H842.01V505.65H843.20V493.71H844.22V504.79H846.27V503.94H847.97V486.04H849.68V471.54H851.04V483.48H852.75V484.33H853.94V475.81H855.65V474.95H856.84V467.28H858.20V468.99H858.72V461.31H859.91V475.81H861.27V474.95H862.47V462.17H863.66V457.90H865.03V460.46H865.88V467.28H867.58V471.54H868.78V467.28H870.14V472.40H871.85V475.81H873.04V468.99H874.06V474.95H876.11V474.10H876.96V466.43H877.81V476.66H879.01V465.58H880.03V477.51H882.08V479.22H883.44V465.58H884.46V462.17H885.83V472.40H887.19V483.48H888.90V483.48H889.92V461.31H890.94V463.87H892.31V458.76H893.50V469.84H894.86V476.66H896.57V467.28H897.42V483.48H898.62V499.68H899.64V498.83H900.49V515.03H901.34V513.32H902.20V526.96H903.05V532.93H904.58V532.93H905.78V518.44H906.46V528.67H907.31V542.31H908.16V547.42H909.87V546.57H910.55V536.34H911.40V547.42H913.11V549.13H913.62V563.64H914.47V577.28H915.84V577.28H916.52V567.90H917.54V578.13H918.74V600.30H919.93V600.30H920.44V588.37H921.29V599.45H921.81V590.07H922.66V608.83H923.85V614.79H924.70V608.83H925.22V623.32H926.41V631.85H927.77V624.17H928.46V636.96H929.48V645.49H930.16V655.72H931.52V650.60H932.38V658.27H934.08V660.83" stroke="#1c1c1c" stroke-width="0.95" fill="none" stroke-linejoin="miter"/><path d="M442.5 661V653" stroke="#111" stroke-width="1"/><path d="M824.8 681.7V658.5" stroke="#f81818" stroke-width="1.2"/><path d="M827.8 681.7V659.2" stroke="#f81818" stroke-width="1.2"/><path d="M839.3 681.7V633.5" stroke="#f81818" stroke-width="1.2"/><path d="M862.3 681.7V658.5" stroke="#f81818" stroke-width="1.2"/><path d="M382.0 440.6H808M933 440.6H949.0" stroke="#800000" stroke-width="2.3" fill="none"/><path d="M807.6 440.6 L808.2 437.6 L809.0 437.5 L810.1 435.0 L811.2 436.8 L812.3 435.0 L813.4 436.1 L814.5 436.2 L815.6 436.4 L816.7 434.5 L817.8 435.8 L818.9 436.1 L820.0 436.0 L821.1 434.9 L822.2 436.4 L823.3 435.7 L824.4 435.3 L825.5 435.6 L826.6 434.7 L827.7 435.5 L828.8 433.9 L829.9 435.2 L831.0 435.1 L832.1 435.8 L833.2 435.0 L834.3 434.4 L835.4 435.2 L836.5 435.1 L837.6 433.9 L838.7 434.7 L839.8 433.7 L840.9 434.2 L842.0 434.5 L843.1 433.0 L844.2 435.2 L845.3 433.1 L846.4 433.5 L847.5 433.7 L848.6 432.9 L849.7 434.1 L850.8 433.5 L851.9 435.1 L853.0 434.0 L854.1 433.5 L855.2 434.1 L856.3 434.3 L857.4 433.0 L858.5 432.7 L859.6 433.2 L860.7 434.1 L861.8 434.0 L862.9 434.7 L864.0 432.9 L865.1 433.6 L866.2 434.5 L867.3 433.0 L868.4 433.5 L869.5 433.8 L870.6 434.0 L871.7 434.3 L872.8 435.0 L873.9 432.7 L875.0 434.8 L876.1 433.9 L877.2 434.1 L878.3 433.2 L879.4 433.8 L880.5 433.0 L881.6 432.7 L882.7 434.7 L883.8 434.3 L884.9 432.8 L886.0 432.8 L887.1 433.7 L888.2 434.8 L889.3 433.9 L890.4 434.1 L891.5 433.9 L892.6 435.1 L893.7 434.6 L894.8 433.4 L895.9 433.2 L897.0 434.4 L898.1 434.8 L899.2 433.3 L900.3 433.7 L901.4 434.8 L902.5 434.3 L903.6 433.8 L904.7 434.3 L905.8 434.2 L906.9 435.8 L908.0 435.0 L909.1 433.7 L910.2 434.2 L911.3 435.0 L912.4 433.4 L913.5 433.5 L914.6 435.5 L915.7 436.2 L916.8 435.8 L917.9 433.9 L919.0 435.0 L920.1 435.8 L921.2 434.3 L922.3 434.5 L923.4 435.2 L924.5 434.5 L925.6 434.5 L926.7 436.1 L927.8 435.4 L928.9 436.7 L930.0 436.2 L931.1 437.4 L932.3 438.5 L933.2 440.6" stroke="#800000" stroke-width="1.25" fill="none" stroke-linejoin="round"/><path d="M391.1 440.6v-2M398.8 440.6v-3M402.4 440.6v-2M408.6 440.6v-2.2M416.0 440.6v-3M429.8 440.6v-3M436.6 440.6v-1.5M446.8 440.6v-1.2M453.5 440.6v-2M464.3 440.6v-1.5M473.8 440.6v-1.2M485.4 440.6v-1.2M492.8 440.6v-3M505.5 440.6v-3M514.8 440.6v-2.2M521.1 440.6v-1.2M524.7 440.6v-2.2M534.4 440.6v-1.2M546.0 440.6v-3M555.8 440.6v-3M560.4 440.6v-3M573.0 440.6v-1.2M578.4 440.6v-2.2M588.2 440.6v-1.5M592.3 440.6v-1.5M604.9 440.6v-2.2M616.4 440.6v-1.2M623.5 440.6v-1.5M635.1 440.6v-3M645.9 440.6v-2M651.0 440.6v-1.2M657.5 440.6v-2.2M666.7 440.6v-3M680.0 440.6v-1.2M688.5 440.6v-3M691.9 440.6v-1.2M703.4 440.6v-2.2M712.7 440.6v-2.2M720.6 440.6v-1.2M731.1 440.6v-3M740.6 440.6v-1.5M748.9 440.6v-2.2M757.9 440.6v-1.2M768.0 440.6v-1.5M780.8 440.6v-1.2M788.5 440.6v-1.2M799.1 440.6v-1.2M812.9 440.6v-1.2M442.5 440.6V433.4M410 440.6v-3.4" stroke="#800000" stroke-width="1"/><rect x="512" y="439.6" width="1.6" height="1.9" fill="#fdfdfd"/><rect x="518" y="439.6" width="1.6" height="1.9" fill="#fdfdfd"/><rect x="535" y="439.6" width="1.6" height="1.9" fill="#fdfdfd"/><rect x="560" y="439.6" width="1.6" height="1.9" fill="#fdfdfd"/><rect x="665" y="439.6" width="1.6" height="1.9" fill="#fdfdfd"/><rect x="720" y="439.6" width="1.6" height="1.9" fill="#fdfdfd"/></svg>
<span class="t" style="left:29.00px;top:644px;font-size:10.4px;transform:scaleX(0.8827);transform-origin:0 50%;color:rgba(0,0,0,0.2);">50 ms</span>
<span class="t" style="left:29.00px;top:607px;font-size:10.4px;transform:scaleX(0.8943);transform-origin:0 50%;color:rgba(0,0,0,0.2);">100 ms</span>
<span class="t" style="left:29.00px;top:570px;font-size:10.4px;transform:scaleX(0.8943);transform-origin:0 50%;color:rgba(0,0,0,0.2);">150 ms</span>
<span class="t" style="left:29.00px;top:533px;font-size:10.4px;transform:scaleX(0.8943);transform-origin:0 50%;color:rgba(0,0,0,0.2);">200 ms</span>
<span class="t" style="left:29.00px;top:496px;font-size:10.4px;transform:scaleX(0.8943);transform-origin:0 50%;color:rgba(0,0,0,0.2);">250 ms</span>
<span class="t" style="left:29.00px;top:460px;font-size:10.4px;transform:scaleX(0.8943);transform-origin:0 50%;color:rgba(0,0,0,0.2);">300 ms</span>
<svg class="r" style="left:0;top:0" width="999" height="704" viewBox="0 0 999 704"><path d="M380.0 696.7L388.5 684L397.0 696.7ZM382.5 696.7L391.0 684L399.5 696.7ZM385.0 696.7L393.5 684L402.0 696.7ZM387.5 696.7L396.0 684L404.5 696.7ZM390.5 696.7L399.0 684L407.5 696.7ZM393.5 696.7L402.0 684L410.5 696.7ZM396.0 696.7L404.5 684L413.0 696.7ZM418.1 696.7L426.6 684L435.1 696.7ZM444.0 696.7L452.5 684L461.0 696.7ZM446.5 696.7L455.0 684L463.5 696.7ZM469.5 696.7L478.0 684L486.5 696.7ZM487.9 696.7L496.4 684L504.9 696.7ZM514.0 696.7L522.5 684L531.0 696.7ZM518.5 696.7L527.0 684L535.5 696.7ZM522.5 696.7L531.0 684L539.5 696.7ZM527.5 696.7L536.0 684L544.5 696.7ZM532.5 696.7L541.0 684L549.5 696.7ZM537.1 696.7L545.6 684L554.1 696.7ZM543.1 696.7L551.6 684L560.1 696.7ZM548.5 696.7L557.0 684L565.5 696.7ZM554.5 696.7L563.0 684L571.5 696.7ZM559.5 696.7L568.0 684L576.5 696.7ZM565.5 696.7L574.0 684L582.5 696.7ZM573.5 696.7L582.0 684L590.5 696.7ZM577.9 696.7L586.4 684L594.9 696.7ZM593.1 696.7L601.6 684L610.1 696.7ZM629.5 696.7L638.0 684L646.5 696.7ZM636.0 696.7L644.5 684L653.0 696.7ZM655.5 696.7L664.0 684L672.5 696.7ZM660.5 696.7L669.0 684L677.5 696.7ZM665.5 696.7L674.0 684L682.5 696.7ZM671.5 696.7L680.0 684L688.5 696.7ZM677.5 696.7L686.0 684L694.5 696.7ZM681.5 696.7L690.0 684L698.5 696.7ZM686.5 696.7L695.0 684L703.5 696.7ZM706.0 696.7L714.5 684L723.0 696.7ZM710.5 696.7L719.0 684L727.5 696.7ZM715.5 696.7L724.0 684L732.5 696.7ZM720.5 696.7L729.0 684L737.5 696.7ZM725.1 696.7L733.6 684L742.1 696.7ZM732.0 696.7L740.5 684L749.0 696.7Z" fill="#f00"/></svg>
<span class="t" style="left:175.24px;top:682px;font-size:9.4px;transform:scaleX(0.9729);transform-origin:0 50%;color:#2f5220;">4:00</span>
<span class="t" style="left:213.65px;top:682px;font-size:9.4px;transform:scaleX(0.9729);transform-origin:0 50%;color:#2f5220;">5:00</span>
<span class="t" style="left:252.06px;top:682px;font-size:9.4px;transform:scaleX(0.9729);transform-origin:0 50%;color:#2f5220;">6:00</span>
<span class="t" style="left:290.47px;top:682px;font-size:9.4px;transform:scaleX(0.9729);transform-origin:0 50%;color:#2f5220;">7:00</span>
<span class="t" style="left:328.88px;top:682px;font-size:9.4px;transform:scaleX(0.9729);transform-origin:0 50%;color:#2f5220;">8:00</span>
<span class="t" style="left:367.29px;top:682px;font-size:9.4px;transform:scaleX(0.9729);transform-origin:0 50%;color:#2f5220;">9:00</span>
<span class="t" style="left:400.40px;top:682px;font-size:9.4px;letter-spacing:-0.006px;color:#2f5220;">10:00</span>
<span class="t" style="left:438.81px;top:682px;font-size:9.4px;letter-spacing:0.169px;color:#2f5220;">11:00</span>
<span class="t" style="left:477.22px;top:682px;font-size:9.4px;letter-spacing:-0.006px;color:#2f5220;">12:00</span>
<span class="t" style="left:515.63px;top:682px;font-size:9.4px;letter-spacing:-0.006px;color:#2f5220;">13:00</span>
<span class="t" style="left:554.04px;top:682px;font-size:9.4px;letter-spacing:-0.006px;color:#2f5220;">14:00</span>
<span class="t" style="left:592.45px;top:682px;font-size:9.4px;letter-spacing:-0.006px;color:#2f5220;">15:00</span>
<span class="t" style="left:630.86px;top:682px;font-size:9.4px;letter-spacing:-0.006px;color:#2f5220;">16:00</span>
<span class="t" style="left:669.27px;top:682px;font-size:9.4px;letter-spacing:-0.006px;color:#2f5220;">17:00</span>
<span class="t" style="left:707.68px;top:682px;font-size:9.4px;letter-spacing:-0.006px;color:#2f5220;">18:00</span>
<span class="t" style="left:746.09px;top:682px;font-size:9.4px;letter-spacing:-0.006px;color:#2f5220;">19:00</span>
<span class="t" style="left:784.50px;top:682px;font-size:9.4px;letter-spacing:-0.006px;color:#2f5220;">20:00</span>
<span class="t" style="left:822.91px;top:682px;font-size:9.4px;letter-spacing:-0.006px;color:#2f5220;">21:00</span>
<span class="t" style="left:861.32px;top:682px;font-size:9.4px;letter-spacing:-0.006px;color:#2f5220;">22:00</span>
<span class="t" style="left:899.73px;top:682px;font-size:9.4px;letter-spacing:-0.006px;color:#2f5220;">23:00</span>
<span class="t" style="left:943.70px;top:682px;font-size:9.4px;letter-spacing:0.000px;color:#2f5220;">0</span>
<span class="t" style="left:470.60px;top:418px;font-size:8.6px;transform:scaleX(0.9393);transform-origin:0 50%;color:#962a2a;">Jitter (ms)</span>
<span class="t" style="left:20.60px;top:564.95px;font-size:10.4px;color:#333;transform:translate(-50%,-50%) rotate(-90deg) scaleX(0.8901);">Latency (ms)</span>
<span class="t" style="left:954.80px;top:571.50px;font-size:10.4px;color:#c8283e;transform:translate(-50%,-50%) rotate(90deg) scaleX(0.8781);">Packet Loss %</span>
</body></html>
